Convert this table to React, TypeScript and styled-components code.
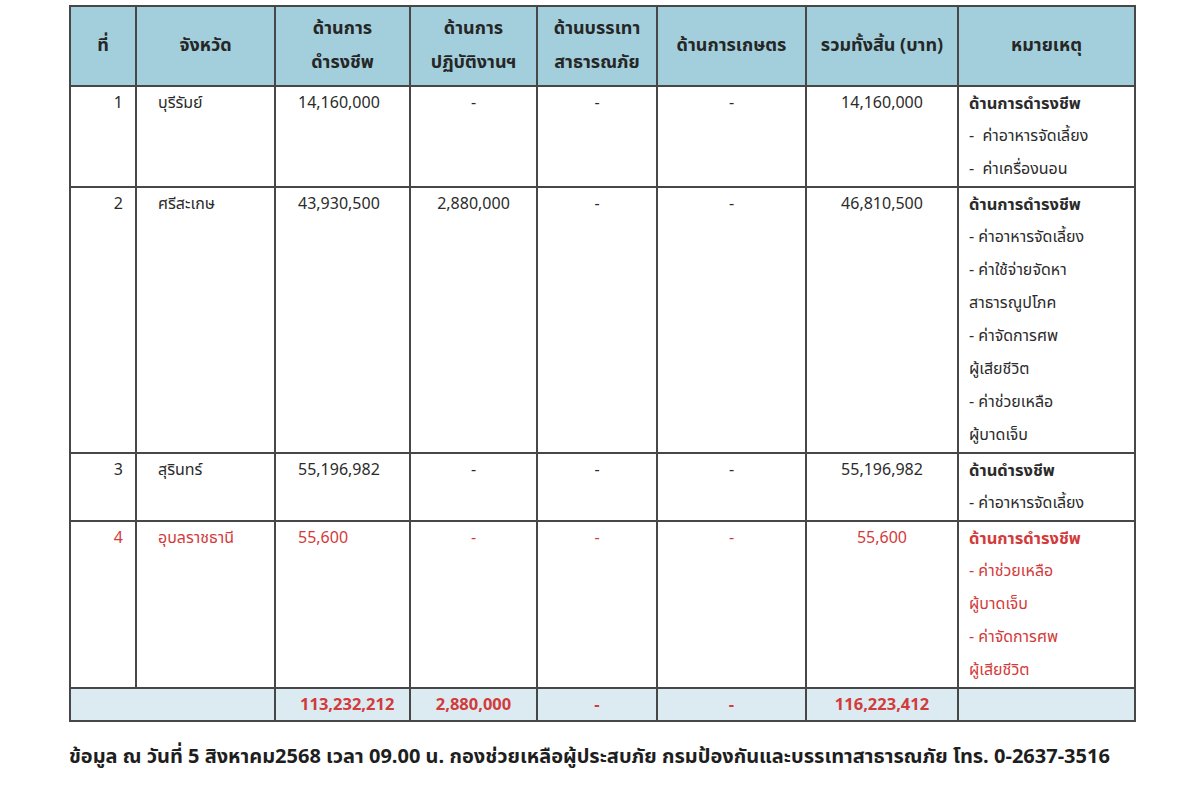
import styled, { createGlobalStyle } from 'styled-components';

const GlobalStyle = createGlobalStyle`
  html, body {
    margin: 0;
    padding: 0;
    background: #ffffff;
  }
  body {
    font-family: "Noto Sans Thai", "Noto Sans", "DejaVu Sans", sans-serif;
    color: #2b2b2b;
  }
`;

const RED = '#d23b3b';

type Row = {
  no: string;
  province: string;
  living: string;
  ops: string;
  relief: string;
  farm: string;
  total: string;
  remarks: { text: string; bold?: boolean }[];
  red?: boolean;
};

const rows: Row[] = [
  {
    no: '1',
    province: 'บุรีรัมย์',
    living: '14,160,000',
    ops: '-',
    relief: '-',
    farm: '-',
    total: '14,160,000',
    remarks: [
      { text: 'ด้านการดำรงชีพ', bold: true },
      { text: '-\u00a0\u00a0ค่าอาหารจัดเลี้ยง' },
      { text: '-\u00a0\u00a0ค่าเครื่องนอน' },
    ],
  },
  {
    no: '2',
    province: 'ศรีสะเกษ',
    living: '43,930,500',
    ops: '2,880,000',
    relief: '-',
    farm: '-',
    total: '46,810,500',
    remarks: [
      { text: 'ด้านการดำรงชีพ', bold: true },
      { text: '- ค่าอาหารจัดเลี้ยง' },
      { text: '- ค่าใช้จ่ายจัดหา' },
      { text: 'สาธารณูปโภค' },
      { text: '- ค่าจัดการศพ' },
      { text: 'ผู้เสียชีวิต' },
      { text: '- ค่าช่วยเหลือ' },
      { text: 'ผู้บาดเจ็บ' },
    ],
  },
  {
    no: '3',
    province: 'สุรินทร์',
    living: '55,196,982',
    ops: '-',
    relief: '-',
    farm: '-',
    total: '55,196,982',
    remarks: [
      { text: 'ด้านดำรงชีพ', bold: true },
      { text: '- ค่าอาหารจัดเลี้ยง' },
    ],
  },
  {
    no: '4',
    province: 'อุบลราชธานี',
    living: '55,600',
    ops: '-',
    relief: '-',
    farm: '-',
    total: '55,600',
    red: true,
    remarks: [
      { text: 'ด้านการดำรงชีพ', bold: true },
      { text: '- ค่าช่วยเหลือ' },
      { text: 'ผู้บาดเจ็บ' },
      { text: '- ค่าจัดการศพ' },
      { text: 'ผู้เสียชีวิต' },
    ],
  },
];

const Page = styled.div`
  width: 1200px;
  height: 810px;
  box-sizing: border-box;
  padding: 5px 0 0 69px;
  display: flex;
  flex-direction: column;
`;

const Table = styled.table`
  width: 1065px;
  border-collapse: collapse;
  table-layout: fixed;
  font-size: 16px;
`;

const HeadCell = styled.th`
  background: #a3cfdc;
  border: 2px solid #474747;
  height: 78px;
  padding: 0 4px;
  font-size: 18px;
  font-weight: 700;
  line-height: 34px;
  text-align: center;
  vertical-align: middle;
  color: #262626;
`;

const Cell = styled.td<{ $align?: 'left' | 'right' | 'center'; $red?: boolean; $pad?: string }>`
  border: 2px solid #474747;
  padding: ${(p) => p.$pad ?? '0'};
  line-height: 33px;
  vertical-align: top;
  text-align: ${(p) => p.$align ?? 'left'};
  color: ${(p) => (p.$red ? RED : '#2b2b2b')};
  white-space: nowrap;
`;

const RemarkLine = styled.div<{ $bold?: boolean }>`
  font-weight: ${(p) => (p.$bold ? 700 : 400)};
  font-size: ${(p) => (p.$bold ? '16.5px' : '16px')};
`;

const TotalCell = styled.td<{ $align?: 'left' | 'right' | 'center'; $pad?: string }>`
  background: #dcebf1;
  border: 2px solid #474747;
  height: 31px;
  padding: ${(p) => p.$pad ?? '0'};
  text-align: ${(p) => p.$align ?? 'center'};
  vertical-align: middle;
  font-size: 16.5px;
  font-weight: 700;
  color: ${RED};
`;

const Footer = styled.p`
  margin: 20px 0 0 0;
  font-size: 20px;
  font-weight: 700;
  color: #1e1e1e;
  white-space: nowrap;
`;

const widths = [66, 139, 135, 127, 120, 149, 152, 177];

export default function App() {
  return (
    <>
      <GlobalStyle />
      <Page>
        <Table>
          <colgroup>
            {widths.map((w, i) => (
              <col key={i} style={{ width: w }} />
            ))}
          </colgroup>
          <thead>
            <tr>
              <HeadCell>ที่</HeadCell>
              <HeadCell>จังหวัด</HeadCell>
              <HeadCell>
                ด้านการ
                <br />
                ดำรงชีพ
              </HeadCell>
              <HeadCell>
                ด้านการ
                <br />
                ปฏิบัติงานฯ
              </HeadCell>
              <HeadCell>
                ด้านบรรเทา
                <br />
                สาธารณภัย
              </HeadCell>
              <HeadCell>ด้านการเกษตร</HeadCell>
              <HeadCell>รวมทั้งสิ้น (บาท)</HeadCell>
              <HeadCell>หมายเหตุ</HeadCell>
            </tr>
          </thead>
          <tbody>
            {rows.map((r) => (
              <tr key={r.no}>
                <Cell $align="right" $pad="0 12px 0 0" $red={r.red}>
                  {r.no}
                </Cell>
                <Cell $pad="0 0 0 21px" $red={r.red}>
                  {r.province}
                </Cell>
                <Cell $pad="0 0 0 22px" $red={r.red}>
                  {r.living}
                </Cell>
                <Cell $align="center" $red={r.red}>
                  {r.ops}
                </Cell>
                <Cell $align="center" $red={r.red}>
                  {r.relief}
                </Cell>
                <Cell $align="center" $red={r.red}>
                  {r.farm}
                </Cell>
                <Cell $align="center" $red={r.red}>
                  {r.total}
                </Cell>
                <Cell $pad="0 0 0 10px" $red={r.red}>
                  {r.remarks.map((l, i) => (
                    <RemarkLine key={i} $bold={l.bold}>
                      {l.text}
                    </RemarkLine>
                  ))}
                </Cell>
              </tr>
            ))}
            <tr>
              <TotalCell colSpan={2} />
              <TotalCell $align="left" $pad="0 0 0 24px">
                113,232,212
              </TotalCell>
              <TotalCell>2,880,000</TotalCell>
              <TotalCell>-</TotalCell>
              <TotalCell>-</TotalCell>
              <TotalCell>116,223,412</TotalCell>
              <TotalCell />
            </tr>
          </tbody>
        </Table>
        <Footer>
          ข้อมูล ณ วันที่ 5 สิงหาคม2568 เวลา 09.00 น. กองช่วยเหลือผู้ประสบภัย กรมป้องกันและบรรเทาสาธารณภัย โทร. 0-2637-3516
        </Footer>
      </Page>
    </>
  );
}
